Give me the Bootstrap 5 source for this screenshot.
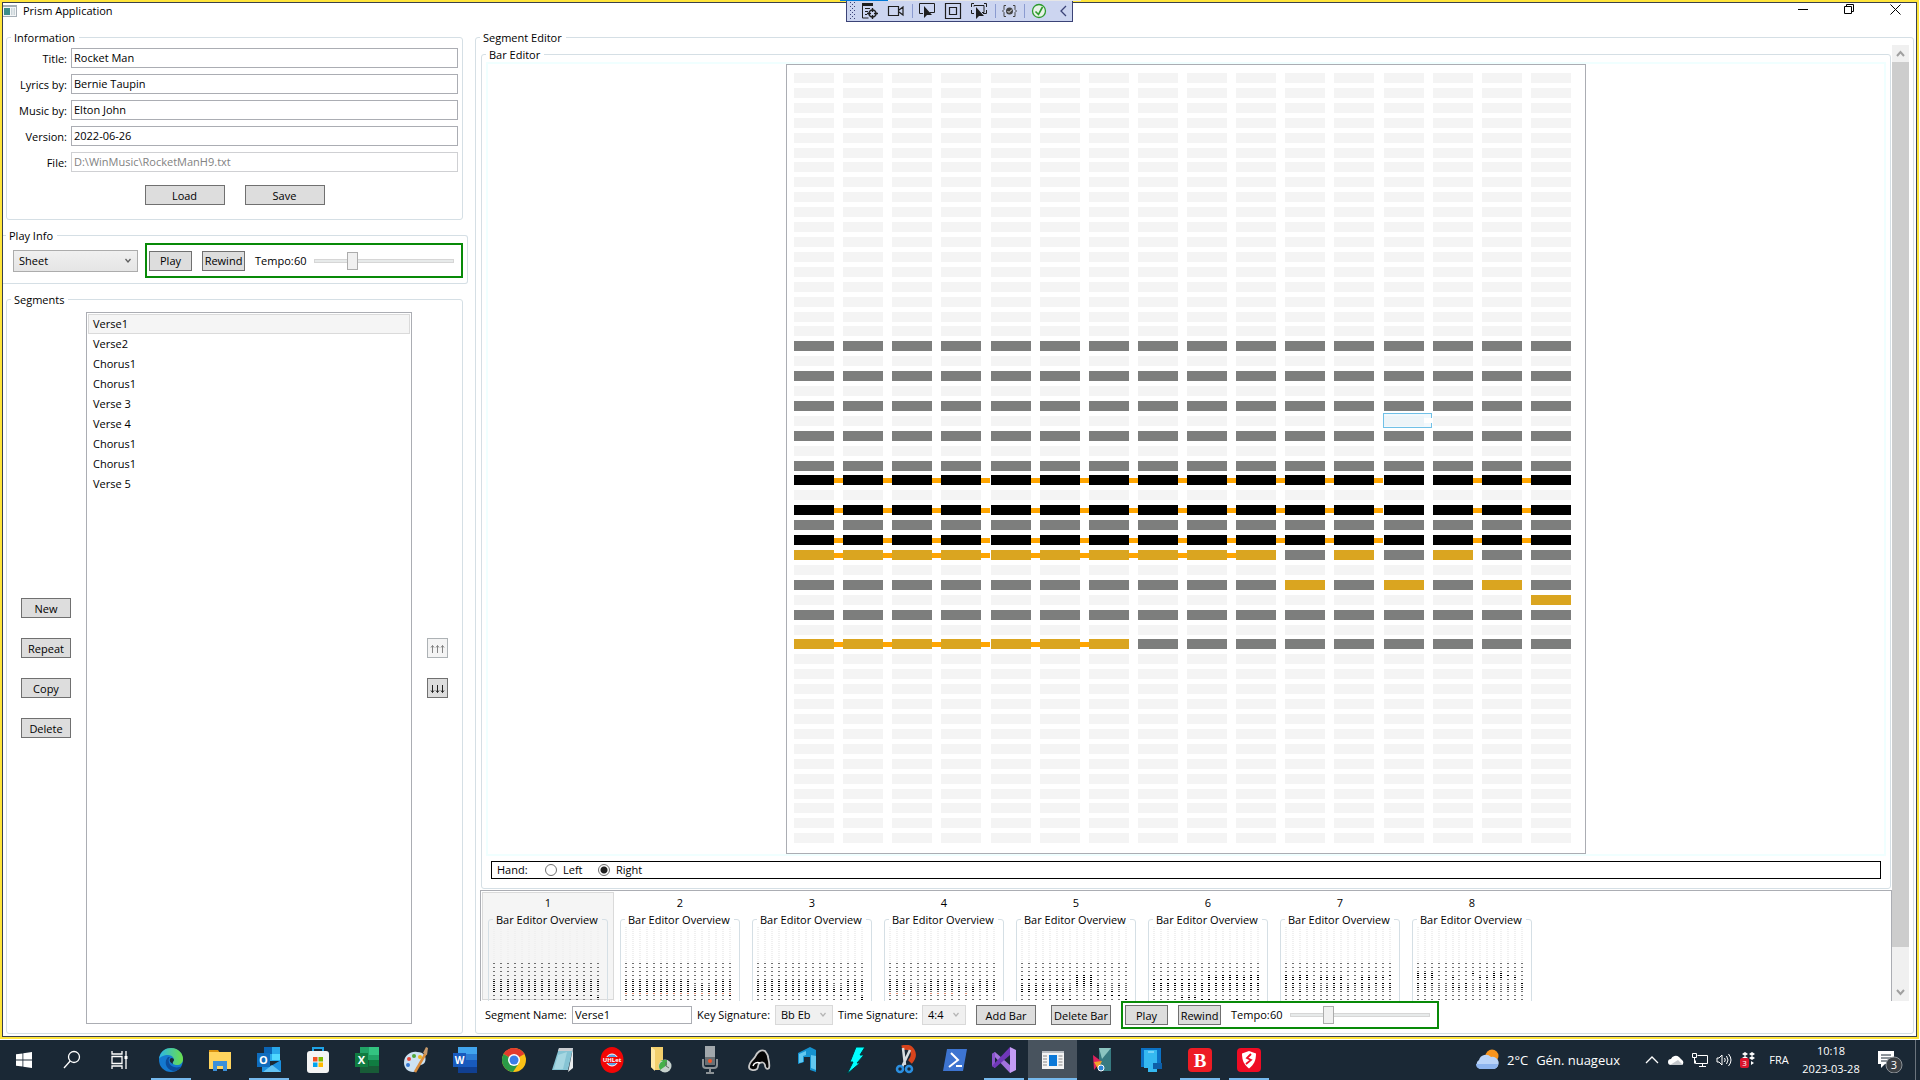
<!DOCTYPE html>
<html lang="en">
<head>
<meta charset="utf-8">
<meta name="viewport" content="width=device-width, initial-scale=1">
<title>Prism Application</title>
<link href="https://cdn.jsdelivr.net/npm/bootstrap@5.3.0/dist/css/bootstrap.min.css" rel="stylesheet">
<style>
  body { font-family: "Open Sans", "Noto Sans", sans-serif; font-size: 11px; line-height: 16px; color: #000; background: #fff; height: 100vh; overflow: hidden; }
  .app-frame { border: 2px solid #ffe53b; margin: 0 1px 1px 0; min-height: 0; }
  .app-window { border: 1px solid #3a404a; min-height: 0; }
  .title-bar { height: 26px; padding-bottom: 10px; }
  .title-icon { margin-right: 6px; }
  .caption-icons { gap: 35px; padding-right: 15px; padding-bottom: 4px; }
  .caption-icons button { padding: 0; border: 0; background: none; display: flex; width: 11px; }
  /* group boxes */
  .group-box { border: 1px solid #d5dfe5; border-radius: 3px; padding: 0; margin: 0; min-width: 0; }
  .group-box > legend { float: none; width: auto; font-size: 11px; line-height: 14px; padding: 2px 4px 0 3px; margin: 0 0 0 4px; white-space: nowrap; }
  .left-col { width: 472px; padding-bottom: 2px; }
  .right-col { padding: 0 2px 2px 0; min-width: 0; }
  .info-box { margin: 0 12px 7px 3px; height: 191px; }
  .info-body { padding-top: 3px; }
  .info-actions { gap: 20px; padding-top: 7px; }
  .play-box { margin: 0 7px 7px 0; height: 57px; border-left: 0; border-radius: 0 3px 3px 0; }
  .play-box > legend { margin-left: 3px; }
  .play-body { padding: 0 4px 0 10px; }
  .play-body .player { height: 35px; }
  .seg-box { margin: 0 12px 0 3px; }
  .seg-body { padding: 5px 14px 9px 14px; }
  .info-row { gap: 4px; margin-bottom: 6px; padding-right: 4px; }
  .info-row label { width: 60px; text-align: right; padding-top: 3px; }
  .txt { height: 20px; border: 1px solid #abadb3; border-radius: 0; padding: 0 2px 2px; font-size: 11px; line-height: 16px; background: #fff; color: #000; min-width: 0; outline: 0; }
  .txt:disabled { border-color: #cfd0d3; color: #828282; background: #fff; opacity: 1; }
  .wbtn { height: 20px; border: 1px solid #707070; background: #ddd; color: #000; padding: 1px 0 0; font-size: 11px; line-height: 16px; white-space: nowrap; }
  .wbtn:disabled { background: #f4f4f4; border-color: #adb2b5; color: #838383; }
  .w80 { width: 80px; } .w60 { width: 60px; } .w50 { width: 50px; } .w43 { width: 43px; } .w21 { width: 21px; }
  .combo { appearance: none; border: 1px solid #acacac; border-radius: 0; height: 22px; padding: 0 5px; font-size: 11px; line-height: 18px; color: #000; opacity: 1;
    background: url("data:image/svg+xml,%3Csvg xmlns='http://www.w3.org/2000/svg' width='6' height='6'%3E%3Cpath d='M.5 1l2.500 3 2.500-3' fill='none' stroke='%23606060' stroke-width='1.300'/%3E%3C/svg%3E") no-repeat right 6px center, linear-gradient(#f0f0f0, #e5e5e5); }
  .combo:disabled { height: 20px; border-color: #d9d9d9; color: #000; opacity: 1;
    background: url("data:image/svg+xml,%3Csvg xmlns='http://www.w3.org/2000/svg' width='6' height='6'%3E%3Cpath d='M.5 1l2.500 3 2.500-3' fill='none' stroke='%23b4b4b4' stroke-width='1.200'/%3E%3C/svg%3E") no-repeat right 6px center, #f0f0f0; }
  .w125 { width: 125px; } .w58 { width: 58px; } .w44 { width: 44px; }
  .player { border: 2px solid #088a08; padding-left: 2px; width: 318px; }
  .player .wbtn { margin-right: 10px; width: 43px; flex: none; }
  .player label { width: 39px; }
  .player output { width: 14px; }
  .tempo { appearance: none; width: 140px; height: 20px; background: none; margin: 0 0 0 6px; }
  .tempo::-webkit-slider-runnable-track { height: 4px; background: #e7eaea; border: 1px solid #d6d6d6; }
  .tempo::-webkit-slider-thumb { appearance: none; width: 11px; height: 18px; margin-top: -8px; background: #f0f0f0; border: 1px solid #acacac; border-radius: 0; }
  .seg-list { border: 1px solid #abadb3; padding: 1px; margin: 0 15px; min-width: 0; }
  .seg-list .list-group-item { height: 20px; border: 1px solid transparent; padding: 1px 4px; line-height: 16px; background: none; color: #000; margin: 0; border-radius: 0; flex: none; }
  .seg-list .list-group-item.active { background: #f5f5f5; border-color: #dadada; }
  .side-btns { gap: 20px; }
  .side-btns.at-left { padding-top: 286px; }
  .side-btns.at-right { padding-top: 326px; }
  .side-btns svg { display: block; margin: 0 auto; }
  /* segment editor */
  .scroller { margin: 0 4px; min-height: 0; }
  .scroll-page { min-width: 0; min-height: 0; overflow: hidden; }
  .scroll-rail { width: 17px; background: #f0f0f0; }
  .scroll-rail button { height: 17px; width: 17px; border: 0; padding: 0; background: none; display: flex; align-items: center; justify-content: center; }
  .scroll-thumb { flex: 885 1 0; background: #cdcdcd; }
  .scroll-rest { flex: 37 1 0; }
  .bar-box { margin: 1px 1px 1px 1px; padding-bottom: 9px; }
  .roll-area { border: 2px solid #f0ffff; margin: 0 4px 5px; }
  .roll { width: 800px; height: 790px; border: 1px solid #abadb3; padding: 8px 14px 9px 7px; display: grid; grid-template-columns: repeat(16, 40px); grid-template-rows: repeat(52, 10px); justify-content: space-between; align-content: space-between; }
  .cell { background: #f4f4f4; position: relative; }
  .cell.scale { background: #7d7e7d; } .cell.held { background: #000; } .cell.melody { background: #daa520; }
  .cell.tie::after { content: ""; position: absolute; left: 100%; top: 3px; width: 9px; height: 5px; background: #ffa500; }
  .cell.hover::before { content: ""; position: absolute; inset: -3px -8px -2px -1px; border: 1px solid #70c0e7; background: #e5f3fb80; }
  .cell.hover::after { content: ""; position: absolute; left: 100%; top: 2px; width: 9px; height: 5px; background: #fff; }
  .hand-box { border: 1px solid #000; height: 18px; margin: 0 9px; padding-left: 5px; }
  .hand-box input { appearance: none; width: 12px; height: 12px; border: 1px solid #707070; border-radius: 50%; margin: 0 6px 0 0; background: #fff; }
  .hand-box input:checked { background: radial-gradient(circle, #212121 3px, #fff 4px); }
  .hand-box .lbl-hand { width: 48px; } .hand-box .lbl-left { width: 35px; }
  .overview-list { border: 1px solid #abadb3; border-bottom: 0; padding: 1px; min-height: 0; overflow: hidden; }
  .ov-item { width: 132px; border: 1px solid transparent; padding: 2px 5px 0 5px; text-align: center; flex: none; }
  .ov-item.active { background: #f5f5f5; border-color: #dadada; }
  .ov-item .group-box > legend { text-align: left; }
  .ov-item svg { display: block; width: 116px; height: 110px; }
  .foot { height: 32px; padding-left: 9px; }
  .foot-row { height: 28px; }
  .foot .txt { height: 18px; width: 120px; }
  .foot label { white-space: nowrap; }
  .foot .player { height: 28px; margin-left: 10px; }
  .foot .add-bar { margin: 0 15px 0 10px; }
  .lab-seg { width: 87px; } .lab-key { width: 78px; margin-left: 5px; } .lab-time { width: 84px; margin-left: 5px; }
  /* debugger strip */
  .debug-strip { position: absolute; left: 50%; top: 1px; margin-left: -114px; width: 227px; height: 21px; background: #ccd5f0; border: 1px solid #3b4377; border-top: 0; z-index: 5; }
  .debug-edge { position: absolute; left: 50%; top: 0; margin-left: -120px; width: 241px; height: 1px; background: linear-gradient(90deg, #0078d7 48px, #e6e6e6 48px); z-index: 6; }
  /* taskbar */
  .taskbar { height: 40px; background: #1a2835; color: #fff; flex: none; }
  .tb-sys, .tb-app { height: 40px; border: 0; background: none; padding: 0; display: flex; align-items: center; justify-content: center; }
  .tb-sys { width: 48px; } .tb-app { width: 49px; }
  .tb-app.running { background: linear-gradient(#76b9ed, #76b9ed) no-repeat center bottom / 40px 2px; }
  .tb-app.current { background: linear-gradient(#76b9ed, #76b9ed) no-repeat center bottom / 49px 2px, #48535e; }
  .tb-pins { padding-left: 2px; }
  .tray-icons { gap: 8px; }
  .weather { font-size: 13px; gap: 8px; margin-right: 24px; }
  .lang { width: 46px; text-align: center; }
  .clock { width: 58px; text-align: center; line-height: 18px; white-space: nowrap; }
  .notice { margin: 0 12px 0 18px; }
  .desk-edge { border-left: 1px solid #6b747d; width: 5px; height: 40px; }
</style>
</head>
<body class="d-flex flex-column">

<div class="debug-edge"></div>
<div class="debug-strip">
  <svg width="225" height="20" viewBox="0 0 225 20" fill="none" stroke="#1e1e1e">
    <g stroke="#3b4377" stroke-dasharray="1 3"><path d="M3.500 1v17M7.500 1v17"/><path d="M5.500 3v15"/></g>
    <path d="M15.500 3v14h6M18 7.500h5M18 10.500h3M18 13.500h2"/><path d="M15 3.500h11" stroke-width="3"/><circle cx="25.500" cy="12.500" r="3.500" stroke-width="1.500"/><path d="M25.500 7v4M25.500 14v4M20 12.500h4M27 12.500h4" stroke-width="1.400"/>
    <path d="M41.500 5.500h10v9h-10zM52 9l4-3v8l-4-3" stroke-width="1.200"/>
    <path d="M65.500 3v14M148.500 3v14M177.500 3v14" stroke="#8b9bd0"/>
    <path d="M76 12.500h-3.500v-10h15v9h-5"/><path d="M77 5v12l3-3h5z" fill="#1e1e1e" stroke="none"/>
    <path d="M98.500 2.500h15v15h-15zM102.500 6.500h7v7h-7z" stroke-width="1.200"/>
    <path d="M127 2.500h-2.500V6M137 2.500h2.500V6M139.500 9v3.500H136M127 12.500h-2.500V9M127 5.500v-1h10v7h-2" /><path d="M129 6v12l3-3h5z" fill="#1e1e1e" stroke="none"/>
    <path d="M159 4.500h-2v4l-1.500 1.500 1.500 1.500v4h2M166 4.500h2v4l1.500 1.500-1.500 1.500v4h-2" stroke="#444"/><circle cx="162.500" cy="10" r="3.500" fill="#444" stroke="none"/><path d="M160.500 10l1.500 1.500 3-3" stroke="#fff"/>
    <circle cx="192" cy="10" r="6.500" fill="#e8f3e8" stroke="#2c9a2c" stroke-width="1.300"/><path d="M188.500 10.500l3 3 4-7.500" stroke="#2c9a2c" stroke-width="1.600"/>
    <path d="M219 5l-5 5 5 5" stroke="#3b4377" stroke-width="1.300"/>
  </svg>
</div>

<div class="app-frame d-flex flex-column flex-grow-1">
<div class="app-window d-flex flex-column flex-grow-1">

  <header class="title-bar d-flex align-items-center justify-content-between">
    <div class="d-flex align-items-center">
      <svg class="title-icon" width="14" height="12" viewBox="0 0 14 12"><path d="M0 0h14v12H0z" fill="#a4adb5"/><path d="M0 2h13v9H0z" fill="#f4f6f7"/><path d="M1 3h6v7H1z" fill="#3c8d8a"/><path d="M8 3h1.500v7H8zM10.500 3H12v7h-1.500z" fill="#c9d3d8"/></svg>
      <span>Prism Application</span>
    </div>
    <div class="caption-icons d-flex align-items-center">
      <button type="button" aria-label="Minimize"><svg width="11" height="11"><path d="M0 5.500h10" stroke="#000"/></svg></button>
      <button type="button" aria-label="Restore"><svg width="11" height="11" fill="none" stroke="#000"><path d="M.5 2.500h7v7h-7zM2.500 2.500v-2h7v7h-2"/></svg></button>
      <button type="button" aria-label="Close"><svg width="11" height="11" stroke="#000"><path d="M.5.5l10 10M10.500.5l-10 10"/></svg></button>
    </div>
  </header>

  <main class="d-flex flex-grow-1 overflow-hidden">
    <section class="left-col d-flex flex-column flex-shrink-0">
      <fieldset class="group-box info-box">
        <legend>Information</legend>
        <div class="info-body">
          <div class="info-row d-flex"><label for="f-title">Title:</label><input class="txt flex-grow-1" id="f-title" value="Rocket Man"></div>
          <div class="info-row d-flex"><label for="f-lyrics">Lyrics by:</label><input class="txt flex-grow-1" id="f-lyrics" value="Bernie Taupin"></div>
          <div class="info-row d-flex"><label for="f-music">Music by:</label><input class="txt flex-grow-1" id="f-music" value="Elton John"></div>
          <div class="info-row d-flex"><label for="f-version">Version:</label><input class="txt flex-grow-1" id="f-version" value="2022-06-26"></div>
          <div class="info-row d-flex"><label for="f-file">File:</label><input class="txt flex-grow-1" id="f-file" value="D:\WinMusic\RocketManH9.txt" disabled></div>
        </div>
        <div class="info-actions d-flex justify-content-center"><button type="button" class="wbtn w80">Load</button><button type="button" class="wbtn w80">Save</button></div>
      </fieldset>

      <fieldset class="group-box play-box">
        <legend>Play Info</legend>
        <div class="play-body d-flex align-items-center justify-content-between">
          <select class="combo w125" aria-label="Play scope"><option>Sheet</option></select>
          <div class="player d-flex align-items-center">
            <button type="button" class="wbtn">Play</button><button type="button" class="wbtn">Rewind</button>
            <label for="tempo-a">Tempo:</label><output for="tempo-a">60</output>
            <input class="tempo" id="tempo-a" type="range" min="0" max="240" value="60">
          </div>
        </div>
      </fieldset>

      <fieldset class="group-box seg-box flex-grow-1 d-flex flex-column">
        <legend>Segments</legend>
        <div class="seg-body d-flex h-100">
          <div class="side-btns at-left d-flex flex-column">
            <button type="button" class="wbtn w50">New</button><button type="button" class="wbtn w50">Repeat</button><button type="button" class="wbtn w50">Copy</button><button type="button" class="wbtn w50">Delete</button>
          </div>
          <ul class="seg-list list-group rounded-0 flex-grow-1">
            <li class="list-group-item active">Verse1</li><li class="list-group-item">Verse2</li><li class="list-group-item">Chorus1</li><li class="list-group-item">Chorus1</li><li class="list-group-item">Verse 3</li><li class="list-group-item">Verse 4</li><li class="list-group-item">Chorus1</li><li class="list-group-item">Chorus1</li><li class="list-group-item">Verse 5</li>
          </ul>
          <div class="side-btns at-right d-flex flex-column">
            <button type="button" class="wbtn w21" aria-label="Move up" disabled><svg width="17" height="10" fill="none" stroke="#838383"><path d="M3.500 9V1.500M2 3.500l1.500-2 1.500 2M8.500 9V1.500M7 3.500l1.500-2 1.500 2M13.500 9V1.500M12 3.500l1.500-2 1.500 2"/></svg></button>
            <button type="button" class="wbtn w21" aria-label="Move down"><svg width="17" height="10" fill="none" stroke="#222"><path d="M3.500 1v7.500M2 6.500l1.500 2 1.500-2M8.500 1v7.500M7 6.500l1.500 2 1.500-2M13.500 1v7.500M12 6.500l1.500 2 1.500-2"/></svg></button>
          </div>
        </div>
      </fieldset>
    </section>

    <section class="right-col d-flex flex-grow-1">
      <fieldset class="group-box flex-grow-1 d-flex flex-column" id="segment-editor">
        <legend>Segment Editor</legend>
        <div class="d-flex flex-column h-100">
        <div class="scroller d-flex flex-grow-1">
          <div class="scroll-page d-flex flex-column flex-grow-1">
            <fieldset class="group-box bar-box flex-shrink-0">
              <legend>Bar Editor</legend>
              <div class="roll-area"><div class="roll mx-auto" id="roll"></div></div>
              <div class="hand-box d-flex align-items-center">
                <span class="lbl-hand">Hand:</span>
                <input type="radio" name="hand" id="hand-l"><label class="lbl-left" for="hand-l">Left</label>
                <input type="radio" name="hand" id="hand-r" checked><label for="hand-r">Right</label>
              </div>
            </fieldset>
            <div class="overview-list d-flex flex-grow-1" id="overviews"></div>
          </div>
          <div class="scroll-rail d-flex flex-column">
            <button type="button" aria-label="Scroll up"><svg width="9" height="7" fill="none" stroke="#a0a0a0" stroke-width="2"><path d="M1 6l3.500-4L8 6"/></svg></button>
            <div class="scroll-thumb"></div><div class="scroll-rest"></div>
            <button type="button" aria-label="Scroll down"><svg width="9" height="7" fill="none" stroke="#a0a0a0" stroke-width="2"><path d="M1 1l3.500 4L8 1"/></svg></button>
          </div>
        </div>
        <div class="foot d-flex align-items-start flex-shrink-0">
          <div class="foot-row d-flex align-items-center">
            <label class="lab-seg" for="seg-name">Segment Name:</label><input class="txt" id="seg-name" value="Verse1">
            <label class="lab-key" for="key-sig">Key Signature:</label><select class="combo w58" id="key-sig" disabled><option>Bb Eb</option></select>
            <label class="lab-time" for="time-sig">Time Signature:</label><select class="combo w44" id="time-sig" disabled><option>4:4</option></select>
            <button type="button" class="wbtn w60 add-bar">Add Bar</button><button type="button" class="wbtn w60">Delete Bar</button>
            <div class="player d-flex align-items-center">
              <button type="button" class="wbtn">Play</button><button type="button" class="wbtn">Rewind</button>
              <label for="tempo-b">Tempo:</label><output for="tempo-b">60</output>
              <input class="tempo" id="tempo-b" type="range" min="0" max="240" value="60">
            </div>
          </div>
        </div>
        </div>
      </fieldset>
    </section>
  </main>
</div>
</div>

<footer class="taskbar d-flex justify-content-between">
  <div class="d-flex">
    <button class="tb-sys" aria-label="Start"><svg width="16" height="16" viewBox="0 0 16 16" fill="#fff"><path d="M0 2.300L6.500 1.400v6.200H0zM7.300 1.300L16 0v7.600H7.300zM0 8.400h6.500v6.200L0 13.700zM7.300 8.400H16V16l-8.700-1.300z"/></svg></button>
    <button class="tb-sys" aria-label="Search"><svg width="18" height="20" fill="none" stroke="#fff" stroke-width="1.300"><circle cx="11" cy="7" r="5.500"/><path d="M7.200 11L1 18"/></svg></button>
    <button class="tb-sys" aria-label="Task view"><svg width="18" height="18" fill="none" stroke="#fff" stroke-width="1.300"><path d="M1 0v3h10V0M1 18v-3h10v3M1 5.500h10v7H1zM15 0v18"/><path d="M15 5v3" stroke-width="3"/></svg></button>
    <div class="tb-pins d-flex">
      <button class="tb-app running" aria-label="Edge"><svg width="26" height="28" viewBox="0 0 26 28"><defs><linearGradient id="eg" x1="0" x2="1"><stop offset="0" stop-color="#2bb5e8"/><stop offset="1" stop-color="#6be04a"/></linearGradient></defs><circle cx="13" cy="14" r="12" fill="#1479d0"/><path d="M1 13C2 5 8 2 13 2c8 0 12 6 12 11 0 4-3 6-6 6-3 0-5-1-4-3 2-3 0-7-5-7-4 0-8 2-9 4z" fill="url(#eg)"/><path d="M10 11c-4 4-3 12 5 14 4 0 7-2 9-5-5 3-12 1-13-4-1-2 0-4 1-5z" fill="#0c4d9c"/><path d="M12 13c1-2 4-1 4 1 0 1-2 2-1 4-2-1-4-3-3-5z" fill="#1a2835"/></svg></button>
      <button class="tb-app" aria-label="File Explorer"><svg width="24" height="24" viewBox="0 0 24 24"><path d="M1 2h9l2 3H1z" fill="#d9920f"/><path d="M1 4h22v17H1z" fill="#ffd45e"/><path d="M5 13h14v10h-4v-5H9v5H5z" fill="#3b8fd8"/></svg></button>
      <button class="tb-app running" aria-label="Outlook"><svg width="26" height="28" viewBox="0 0 26 28"><path d="M8 1h16v14H8z" fill="#28a8ea"/><path d="M8 1h8v7H8z" fill="#0a64b4"/><path d="M16 8h8v6h-8z" fill="#50d9ff"/><path d="M6 14l9 6 10-6v12H6z" fill="#1b90df"/><path d="M7 26l9-7 9 7z" fill="#64c4f4"/><path d="M1 7h13v14H1z" fill="#0f6cbd"/><text x="7.500" y="18" font-size="11" font-weight="700" fill="#fff" text-anchor="middle">O</text></svg></button>
      <button class="tb-app" aria-label="Store"><svg width="24" height="28" viewBox="0 0 24 28"><path d="M7 7V2h10v5" fill="none" stroke="#1fa4e8" stroke-width="2"/><rect x="1" y="5" width="22" height="22" rx="3" fill="#f4f4f4"/><path d="M7 11h4.500v4.500H7z" fill="#f25022"/><path d="M12.500 11H17v4.500h-4.500z" fill="#7fba00"/><path d="M7 16.500h4.500V21H7z" fill="#00a4ef"/><path d="M12.500 16.500H17V21h-4.500z" fill="#ffb900"/></svg></button>
      <button class="tb-app" aria-label="Excel"><svg width="26" height="26" viewBox="0 0 26 26"><path d="M6 0h19v26H6z" fill="#21a366"/><path d="M15 0h10v8H15z" fill="#33c481"/><path d="M6 13h19v13H6z" fill="#185c37"/><path d="M15 13h10v6H15z" fill="#107c41"/><path d="M1 6h13v14H1z" fill="#107c41"/><text x="7.500" y="17" font-size="11" font-weight="700" fill="#fff" text-anchor="middle">X</text></svg></button>
      <button class="tb-app" aria-label="Paint"><svg width="26" height="28" viewBox="0 0 26 28"><path d="M1 17C1 9 8 5 14 6c7 0 10 5 8 10-2 4-6 2-8 5-1 2 0 5-4 5-5 0-9-4-9-9z" fill="#cde2f2"/><circle cx="6" cy="13" r="2" fill="#e9473b"/><circle cx="11" cy="10" r="2" fill="#50a83a"/><circle cx="17" cy="11" r="2" fill="#f1b51d"/><circle cx="5" cy="19" r="2" fill="#3579d4"/><path d="M23 7L12 26" stroke="#d98c3c" stroke-width="2.500"/><path d="M20 7l3-6 2 1-1 7z" fill="#c79a6c"/></svg></button>
      <button class="tb-app" aria-label="Word"><svg width="26" height="26" viewBox="0 0 26 26"><path d="M6 0h19v26H6z" fill="#2b7cd3"/><path d="M6 0h19v7H6z" fill="#41a5ee"/><path d="M6 13h19v7H6z" fill="#185abd"/><path d="M6 20h19v6H6z" fill="#103f91"/><path d="M1 6h13v14H1z" fill="#185abd"/><text x="7.500" y="17" font-size="10" font-weight="700" fill="#fff" text-anchor="middle">W</text></svg></button>
      <button class="tb-app" aria-label="Chrome"><svg width="26" height="28" viewBox="0 0 26 28"><circle cx="13" cy="14" r="12" fill="#fbc116"/><path d="M13 14L2.600 8A12 12 0 0 1 23.400 8z" fill="#e33b2e"/><path d="M2.600 8A12 12 0 0 0 12 26l6-9-5-3z" fill="#2a9a47"/><circle cx="13" cy="14" r="6" fill="#fff"/><circle cx="13" cy="14" r="4.500" fill="#3b7de8"/></svg></button>
      <button class="tb-app" aria-label="Notepad"><svg width="24" height="26" viewBox="0 0 24 26"><path d="M8 1h14l-5 22H1z" fill="#86c4d4"/><path d="M8 1h14l-1 3H7z" fill="#c9ccd0"/><path d="M22 1v20l-5 4 1-4z" fill="#e9ecee"/><path d="M7 8l9-3-4 17H3z" fill="#b4e0e8" opacity=".7"/></svg></button>
      <button class="tb-app" aria-label="Transit"><svg width="24" height="28" viewBox="0 0 24 28"><ellipse cx="12" cy="14" rx="11.500" ry="13" fill="#f20505"/><circle cx="12" cy="14" r="6" fill="#5c9de0" stroke="#fff"/><path d="M1 11h22v6H1z" fill="#f20505"/><text x="12" y="16" font-size="6" font-weight="700" fill="#fff" text-anchor="middle">UHLet</text></svg></button>
      <button class="tb-app" aria-label="History folder"><svg width="24" height="28" viewBox="0 0 24 28"><path d="M2 1h12v23H5l-3-3z" fill="#f3cf6c"/><path d="M2 1l4 3v21l-4-4z" fill="#ffe9a6"/><circle cx="16" cy="20" r="6.500" fill="#c7d2cd"/><path d="M11 24a6 6 0 0 1 3-9l-3-1h7v5" fill="#45b04a"/><path d="M17 20v-4M17 20l3 2" stroke="#666"/></svg></button>
      <button class="tb-app" aria-label="Recorder"><svg width="18" height="28" viewBox="0 0 18 28"><path d="M4 0h10v12H4z" fill="#a2a8ac"/><path d="M4 11h10v8H4z" fill="#6a7074"/><circle cx="9" cy="15" r="2" fill="#f0562b"/><path d="M2 13v6q0 3 3 3h8q3 0 3-3v-6M9 22v4M5 27h8" fill="none" stroke="#8c9296" stroke-width="2"/></svg></button>
      <button class="tb-app" aria-label="Rodent"><svg width="24" height="24" viewBox="0 0 24 24"><path d="M2 19c0-5 4-7 6-10 2-5 6-8 10-6 1 2 3 3 3 6 1 4 2 8 1 11-2 2-4 0-4-3-1-3-3-3-5-2-3 1-1 4-3 6-3 2-8 1-8-2z" fill="#050505" stroke="#c8c8c8" stroke-width="1.800"/><path d="M6 18c1-3 4-4 7-3" fill="none" stroke="#fff" stroke-width="1.500"/></svg></button>
      <button class="tb-app" aria-label="Arch"><svg width="24" height="28" viewBox="0 0 24 28"><path d="M2 7l12-6v10H8v5l-6 2z" fill="#1592cf"/><path d="M14 1l6 3v22l-6-2z" fill="#1592cf"/><path d="M3 8l7-3v4l-3 1v6l-4 1zM15 9l5 1v14l-5-2z" fill="#62c8f0"/></svg></button>
      <button class="tb-app" aria-label="Lightning"><svg width="22" height="30" viewBox="0 0 22 30"><path d="M10 2h9l-5 8h4l-7 8h3L1 29l6-12H4z" fill="#0ff" stroke="#003338"/></svg></button>
      <button class="tb-app" aria-label="Snipping Tool"><svg width="24" height="30" viewBox="0 0 24 30"><path d="M8 3c10-3 15 6 8 14" fill="none" stroke="#d9441c" stroke-width="5"/><path d="M9 3l2 17M16 5L8 22" stroke="#d8dde0" stroke-width="2.500"/><circle cx="6" cy="24" r="3" fill="none" stroke="#2b8fe0" stroke-width="2.500"/><circle cx="15" cy="24" r="3" fill="none" stroke="#2b8fe0" stroke-width="2.500"/></svg></button>
      <button class="tb-app" aria-label="PowerShell"><svg width="26" height="24" viewBox="0 0 26 24"><path d="M5 1h20l-4 22H1z" fill="#3d74d0"/><path d="M9 5l7 7-9 7M14 18h6" fill="none" stroke="#fff" stroke-width="2"/></svg></button>
      <button class="tb-app running" aria-label="Visual Studio"><svg width="26" height="28" viewBox="0 0 26 28"><path d="M1 8l3-2 16 14v6l-1 1z" fill="#a273dc"/><path d="M1 8l3-2v16l-3-2z" fill="#8a55cc"/><path d="M1 20l3 2L19 9V1z" fill="#7038b8"/><path d="M19 1l6 3v20l-6 3z" fill="#c59cf5"/></svg></button>
      <button class="tb-app current" aria-label="Prism Application"><svg width="22" height="18" viewBox="0 0 22 18"><path d="M0 0h22v18H0z" fill="#f4f4f4"/><path d="M0 0h22v2H0z" fill="#b9bec4"/><path d="M7 4h8v11H7z" fill="#0c79d8"/><path d="M1 5h4M1 8h4M1 11h4M1 14h4M16.500 5h4M16.500 8h4M16.500 11h4M16.500 14h4" stroke="#888"/></svg></button>
      <button class="tb-app" aria-label="Photo tool"><svg width="18" height="26" viewBox="0 0 18 26"><path d="M6 1h12v23H6z" fill="#377a80"/><path d="M6 1h12L9 12z" fill="#8bc5c0"/><path d="M0 8l8 6-7 9z" fill="#e0215d"/><path d="M1 15l8-1-4 8z" fill="#f2a52c"/><circle cx="8" cy="21" r="3" fill="#2f86d8" stroke="#fff"/></svg></button>
      <button class="tb-app" aria-label="Devices"><svg width="22" height="26" viewBox="0 0 22 26"><path d="M1 1h20v19H1z" fill="#0b72c5"/><path d="M4 3h13v22H8v-4H4z" fill="#35b9f1"/><path d="M8 5h6" stroke="#b4ecff"/><path d="M13 16h9v6h-9z" fill="#0e5fa8"/></svg></button>
      <button class="tb-app running" aria-label="Bitdefender"><svg width="24" height="30" viewBox="0 0 24 30"><rect x="0" y="3" width="24" height="24" rx="4" fill="#ed1c24"/><text x="12" y="22" font-size="19" font-weight="700" font-family="Liberation Serif, serif" fill="#fff" text-anchor="middle">B</text></svg></button>
      <button class="tb-app running" aria-label="VPN"><svg width="24" height="30" viewBox="0 0 24 30"><rect x="0" y="3" width="24" height="24" rx="4" fill="#ef0c24"/><path d="M12 6l7 2.500c0 7-2 11-7 15-5-4-7-8-7-15z" fill="#fff"/><path d="M9 19l5-4-4-2 4-4" fill="none" stroke="#ef0c24" stroke-width="1.800"/></svg></button>
    </div>
  </div>
  <div class="d-flex align-items-center">
    <div class="weather d-flex align-items-center">
      <svg width="24" height="22" viewBox="0 0 24 22"><circle cx="17" cy="7" r="6.500" fill="#f7941d"/><path d="M5 20a5 5 0 0 1-1-9 7 7 0 0 1 12-3 6 6 0 0 1 3 12z" fill="#b9d3f8"/><path d="M5 20a5 5 0 0 1-4-5h22a5 5 0 0 1-4 5z" fill="#8db4ee"/></svg>
      <span>2°C</span><span>Gén. nuageux</span>
    </div>
    <div class="tray-icons d-flex align-items-center">
      <svg width="16" height="16" fill="none" stroke="#fff" stroke-width="1.300"><path d="M2 11l6-6 6 6"/></svg>
      <svg width="16" height="12"><path d="M3 11a3 3 0 0 1 0-6 5 5 0 0 1 8-2l3 3a3 3 0 0 1 0 5z" fill="#fff"/><path d="M2 11l8-5 5 5z" fill="#c4c8cc"/></svg>
      <svg width="16" height="16" fill="none" stroke="#fff"><path d="M5.500 3.500h10v8H3.500v-3M10.500 12v2.500M7 14.500h7M.5 1.500h4v4h-4zM2.500 5.500v6"/></svg>
      <svg width="16" height="16" fill="none" stroke="#fff"><path d="M1 6h2l3-3v10L3 10H1zM8.500 6q1.500 2 0 4M10.500 4q3 4 0 8M12.500 2q5 6 0 12"/></svg>
      <svg width="16" height="16"><path d="M5 0l3 2-3 2-3-2zM12 0l3 2-3 2-3-2zM5 4l3 2-3 2-3-2zM12 4l3 2-3 2-3-2zM11 9l3 2-3 2z" fill="#fff"/><rect x="0" y="6" width="9" height="10" rx="2" fill="#d8142c"/><text x="4.500" y="14" font-size="8" fill="#fff" text-anchor="middle">3</text></svg>
    </div>
    <div class="lang">FRA</div>
    <div class="clock"><div>10:18</div><div>2023-03-28</div></div>
    <svg class="notice" width="25" height="26" viewBox="0 0 25 26"><path d="M0 4h16v13H7l-4 4v-4H0z" fill="#fff"/><path d="M3 8h10M3 11h10M3 14h7" stroke="#1a2835"/><circle cx="16" cy="18" r="8" fill="#3a3f44" stroke="#8c9298"/><text x="16" y="22" font-size="11" fill="#fff" text-anchor="middle">3</text></svg>
    <div class="desk-edge"></div>
  </div>
</footer>

<script src="https://cdn.jsdelivr.net/npm/bootstrap@5.3.0/dist/js/bootstrap.bundle.min.js"></script>
<script>
  // Rows of the roll: scale tones, held chord tones and melody notes (columns in sixteenths).
  const COLS = 16, ROWS = 52;
  const scaleRows = [18, 20, 22, 24, 26, 30, 32, 34, 36, 38];
  const heldRows = [27, 29, 31];
  const melody = { 32: [0,1,2,3,4,5,6,7,8,9,11,13], 34: [10,12,14], 35: [15], 38: [0,1,2,3,4,5,6] };
  const ties = { 27: 12, 29: 12, 31: 12, 32: 9, 38: 6 };
  const roll = document.getElementById('roll');
  for (let r = 0; r < ROWS; r++) for (let c = 0; c < COLS; c++) {
    const cell = document.createElement('div');
    cell.className = 'cell';
    if (heldRows.includes(r)) cell.classList.add('held');
    else if (melody[r] && melody[r].includes(c)) cell.classList.add('melody');
    else if (scaleRows.includes(r)) cell.classList.add('scale');
    if (ties[r] && (c < ties[r] || (heldRows.includes(r) && (c === 13 || c === 14)))) cell.classList.add('tie');
    if (r === 23 && c === 12) cell.classList.add('hover');
    roll.append(cell);
  }

  // Overviews: row -> string of 16 columns, x = note, p = other hand, . = none.
  const all = 'xxxxxxxxxxxxxxxx';
  const bars = [
    { 27: all, 29: all, 31: all, 32: 'xxxxxxxxxx.x.x..', 34: '..........x.x.x.', 35: '...............x' },
    { 27: 'xxxxxxxxxx...xxx', 29: 'xxxxxxxxxx.x.xxx', 31: all, 32: 'xxxxxxxxxxx.xxx.', 33: 'pppppppppppppppp', 34: '...............x' },
    { 27: 'xxxxxxxxxxx..xxx', 29: 'xxxxxxxxxxx..xxx', 31: all, 32: 'xxxxxxxxxxxx.xx.', 34: '............x...', 35: '...............x', 36: '...............x' },
    { 27: 'xxx...xxxx...xxx', 29: 'xxx...xxxx...xxx', 30: '...x.x....xxx...', 31: 'xxx...xxxx..x.xx', 32: '...x.x....x.x.x.', 33: 'ppp.p.pppp.p....' },
    { 24: '........xxx.....', 25: '........xxx.....', 26: 'xxxx.xx.xxx.....', 27: '........xxx.....', 28: '........xxx.....', 29: 'xxxxxx..xxxx..x.', 31: 'xxxxxxxx........', 32: 'xxxx.xx....x.x..', 34: '...........xxxx.', 36: '.......x.......x' },
    { 24: '........x.xxx.xx', 25: '........xxxxxxxx', 26: 'xxxxxxx.xxxxxxxx', 28: all, 29: all, 31: all, 32: '.......xx.......', 35: '....xxx.........', 36: '.......xx...x...' },
    { 24: 'x.xx...........x', 25: 'xxxx.xxxx..xxxx.', 26: 'xxxx.xxxx..xx...', 28: 'xxx.x..xx.xx.xxx', 30: 'xx.xx.xxxx.xx.xx', 32: '..x.............' },
    { 23: 'xxx.....x..xx...', 24: 'x.x........xxx..', 25: 'xxx..x...xxxx.x.', 28: 'xxx..x.x..x....x', 30: 'xx...xxx.xxx.x.x' }
  ];
  const tones = [18, 20, 22, 24, 26, 28, 29, 30, 31, 32, 34, 36, 38];
  const list = document.getElementById('overviews');
  bars.forEach((bar, i) => {
    let dots = '';
    for (let r = 0; r < ROWS; r++) for (let c = 0; c < COLS; c++) {
      const n = (bar[r] || '')[c];
      const fill = n === 'x' ? '#000' : n === 'p' ? '#e9967a' : tones.includes(r) ? '#707070' : '#f0f0f0';
      dots += `<rect x="${Math.round(4 + 6.9 * c)}" y="${r * 2}" width="2" height="1" fill="${fill}"/>`;
    }
    list.insertAdjacentHTML('beforeend', `<div class="ov-item${i ? '' : ' active'}"><div>${i + 1}</div><fieldset class="group-box"><legend>Bar Editor Overview</legend><svg viewBox="0 0 116 110" shape-rendering="crispEdges">${dots}</svg></fieldset></div>`);
  });
</script>
</body>
</html>
